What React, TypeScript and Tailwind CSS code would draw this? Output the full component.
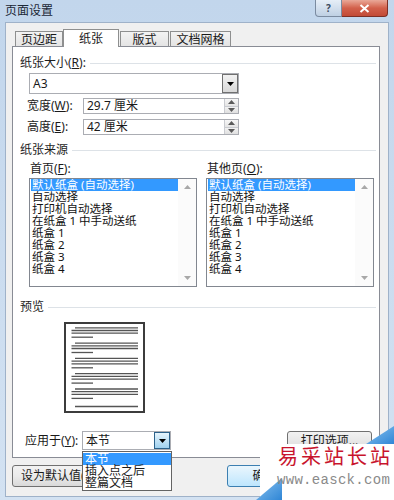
import React from "react";

const Down = ({ c = "#000" }: { c?: string }) => (
  <svg width="7" height="4" viewBox="0 0 7 4">
    <polygon points="0,0 7,0 3.5,4" fill={c} />
  </svg>
);
const Up = ({ c = "#000" }: { c?: string }) => (
  <svg width="7" height="4" viewBox="0 0 7 4">
    <polygon points="0,4 7,4 3.5,0" fill={c} />
  </svg>
);

const Spin = () => (
  <div className="flex flex-col w-[14px] h-full border-l border-[#c9cbd0]">
    <div className="flex-1 flex items-center justify-center bg-gradient-to-b from-[#f7f7f7] to-[#e4e4e4] border-b border-[#c9cbd0]">
      <Up c="#5a5a5a" />
    </div>
    <div className="flex-1 flex items-center justify-center bg-gradient-to-b from-[#f2f2f2] to-[#e0e0e0]">
      <Down c="#5a5a5a" />
    </div>
  </div>
);

const Header = ({ children, mt }: { children: React.ReactNode; mt: string }) => (
  <div className={`${mt} flex items-center h-[14px] pl-[7px]`}>
    <span className="leading-[14px] text-[#1e1e1e] whitespace-nowrap">{children}</span>
    <div className="flex-1 h-px bg-[#dde2e7] ml-[4px] mr-[3px]" />
  </div>
);

const items = [
  "默认纸盒 (自动选择)",
  "自动选择",
  "打印机自动选择",
  "在纸盒 1 中手动送纸",
  "纸盒 1",
  "纸盒 2",
  "纸盒 3",
  "纸盒 4",
];

const ListBox = () => (
  <div className="mt-[2px] h-[109px] border border-[#828790] bg-white flex">
    <div className="flex-1 pl-px">
      {items.map((t, i) => (
        <div
          key={i}
          className={`h-[12px] leading-[12px] text-[11.5px] pl-px whitespace-nowrap ${
            i === 0 ? "bg-[#3399ff] text-white" : "text-[#111]"
          }`}
        >
          {t}
        </div>
      ))}
    </div>
    <div className="w-[18px] bg-[#fbfbfb] flex flex-col items-center justify-between py-[6px]">
      <Up c="#a8a8a8" />
      <Down c="#a8a8a8" />
    </div>
  </div>
);

const Preview = () => {
  const groups = [0, 1, 2, 3, 4];
  return (
    <svg width="82" height="92" viewBox="0 0 82 92">
      <rect x="1" y="1" width="79" height="89" fill="#fff" stroke="#3c3c3c" strokeWidth="2" />
      {groups.map((k) => {
        const y0 = 5.8 + 15.3 * k;
        return (
          <g key={k} stroke="#555" strokeWidth="1.3">
            <line x1="11" y1={y0} x2="74" y2={y0} />
            <line x1="7.5" y1={y0 + 2.7} x2="74" y2={y0 + 2.7} />
            <line x1="7.5" y1={y0 + 5.4} x2="74" y2={y0 + 5.4} />
            <line x1="7.5" y1={y0 + 9.4} x2="29" y2={y0 + 9.4} />
          </g>
        );
      })}
      <line x1="11" y1="84.5" x2="74" y2="84.5" stroke="#555" strokeWidth="1.3" />
    </svg>
  );
};

export default function App() {
  return (
    <div className="relative w-[394px] h-[500px] overflow-hidden bg-gradient-to-b from-[#c2d6ec] to-[#d3e2f2] font-['Noto_Sans','Noto_Sans_CJK_SC',sans-serif] text-[12px] text-[#1a1a1a]">
      {/* title bar */}
      <div className="flex h-[22px] items-start">
        <div className="pl-[5px] pt-[4px] leading-[14px] text-[12px] text-[#1b2736]">页面设置</div>
        <div className="ml-auto mr-[6px] flex">
          <div className="w-[27px] h-[17px] border border-[#7b8ba0] border-t-0 rounded-bl-[4px] bg-gradient-to-b from-[#e6eef7] to-[#bfd0e3] flex items-center justify-center text-[10px] font-bold leading-none text-[#3a4a60]">
            ?
          </div>
          <div className="w-[46px] h-[17px] border border-[#7c2f25] border-t-0 border-l-0 rounded-br-[4px] bg-gradient-to-b from-[#e9a898] via-[#d2604b] to-[#c24a36] flex items-center justify-center">
            <svg width="11" height="9" viewBox="0 0 11 9">
              <path d="M1.5 1 L9.5 8 M9.5 1 L1.5 8" stroke="#fff" strokeWidth="2" />
            </svg>
          </div>
        </div>
      </div>

      {/* dialog body */}
      <div className="mx-[5px] h-[475px] border border-[#9fb2c9] bg-[#f0f0f0] flex flex-col">
        {/* tabs */}
        <div className="flex items-end h-[24px] pl-[9px]">
          <div className="w-[48px] h-[16px] border border-b-0 border-[#8e8f8f] bg-gradient-to-b from-[#f3f3f3] to-[#e3e3e3] flex items-center justify-center leading-[14px]">
            页边距
          </div>
          <div className="relative z-10 w-[56px] h-[18px] border border-b-0 border-[#8e8f8f] bg-white flex items-center justify-center leading-[14px] pt-px">
            纸张
          </div>
          <div className="ml-px w-[49px] h-[16px] border border-b-0 border-[#8e8f8f] bg-gradient-to-b from-[#f3f3f3] to-[#e3e3e3] flex items-center justify-center leading-[14px]">
            版式
          </div>
          <div className="ml-px w-[61px] h-[16px] border border-b-0 border-[#8e8f8f] bg-gradient-to-b from-[#f3f3f3] to-[#e3e3e3] flex items-center justify-center leading-[14px]">
            文档网格
          </div>
        </div>

        {/* panel */}
        <div className="-mt-px ml-[6px] w-[368px] h-[412px] border border-[#898c95] bg-white flex flex-col">
          <Header mt="mt-[9px]">
            纸张大小(<u>R</u>):
          </Header>

          <div className="mt-[3px] ml-[16px] w-[210px] h-[21px] border border-[#abadb3] bg-white flex items-stretch">
            <div className="flex-1 pl-[3px] leading-[19px]">A3</div>
            <div className="w-[16px] border border-[#707070] bg-gradient-to-b from-[#f2f2f2] to-[#d8d8d8] flex items-center justify-center">
              <Down />
            </div>
          </div>

          <div className="mt-[4px] flex items-center h-[16px]">
            <div className="ml-[14px] w-[56px] leading-[14px] whitespace-nowrap">
              宽度(<u>W</u>):
            </div>
            <div className="w-[156px] h-[16px] border border-[#abadb3] bg-white flex">
              <div className="flex-1 pl-[3px] leading-[14px]">29.7 厘米</div>
              <Spin />
            </div>
          </div>

          <div className="mt-[5px] flex items-center h-[16px]">
            <div className="ml-[14px] w-[56px] leading-[14px] whitespace-nowrap">
              高度(<u>E</u>):
            </div>
            <div className="w-[156px] h-[16px] border border-[#abadb3] bg-white flex">
              <div className="flex-1 pl-[3px] leading-[14px]">42 厘米</div>
              <Spin />
            </div>
          </div>

          <Header mt="mt-[8px]">纸张来源</Header>

          <div className="mt-[5px] flex pl-[16px] gap-[9px]">
            <div className="w-[168px] flex flex-col">
              <div className="h-[14px] leading-[14px] pl-px">
                首页(<u>F</u>):
              </div>
              <ListBox />
            </div>
            <div className="w-[168px] flex flex-col">
              <div className="h-[14px] leading-[14px] pl-px">
                其他页(<u>O</u>):
              </div>
              <ListBox />
            </div>
          </div>

          <Header mt="mt-[13px]">预览</Header>

          <div className="mt-[8px] ml-[51px]">
            <Preview />
          </div>

          <div className="mt-[17px] flex items-center h-[19px]">
            <div className="ml-[12px] w-[57px] leading-[14px] whitespace-nowrap">
              应用于(<u>Y</u>):
            </div>
            <div className="w-[89px] h-[19px] border border-[#abadb3] bg-white flex">
              <div className="flex-1 pl-[3px] leading-[17px]">本节</div>
              <div className="w-[16px] border border-[#2c628b] bg-gradient-to-b from-[#e5f4fc] to-[#9fd1ef] flex items-center justify-center">
                <Down />
              </div>
            </div>
            <div className="ml-auto mr-[7px] w-[85px] h-[19px] border border-[#707070] rounded-[3px] bg-gradient-to-b from-[#f2f2f2] to-[#dddddd] flex items-center justify-center leading-[14px]">
              打印选项...
            </div>
          </div>
        </div>

        {/* bottom buttons */}
        <div className="mt-[7px] flex h-[22px]">
          <div className="ml-[6px] w-[78px] border border-[#707070] rounded-[3px] bg-gradient-to-b from-[#f2f2f2] via-[#ebebeb] to-[#d9d9d9] flex items-center pl-[8px] leading-[14px] whitespace-nowrap">
            设为默认值(<u>D</u>)
          </div>
          <div className="ml-[137px] w-[75px] border border-[#3c7fb1] rounded-[3px] bg-gradient-to-b from-[#eaf6fd] to-[#bee6fd] flex items-center justify-center leading-[14px]">
            确定
          </div>
          <div className="ml-[6px] w-[75px] border border-[#707070] rounded-[3px] bg-gradient-to-b from-[#f2f2f2] to-[#dddddd] flex items-center justify-center leading-[14px]">
            取消
          </div>
        </div>
      </div>

      {/* open dropdown list */}
      <div className="absolute left-[82px] top-[451px] w-[90px] border border-[#646464] bg-white py-px">
        <div className="h-[12px] leading-[12px] pl-[2px] bg-[#3399ff] text-white">本节</div>
        <div className="h-[12px] leading-[12px] pl-[2px]">插入点之后</div>
        <div className="h-[12px] leading-[12px] pl-[2px]">整篇文档</div>
      </div>

      {/* watermark */}
      <div className="absolute left-[256px] top-[426px] w-[138px] h-[74px]">
        <svg className="absolute inset-0" width="138" height="74" viewBox="0 0 138 74">
          <defs>
            <linearGradient id="wb" x1="0" y1="0" x2="1" y2="1">
              <stop offset="0" stopColor="#8cc4ef" />
              <stop offset="1" stopColor="#2f86d6" />
            </linearGradient>
          </defs>
          <rect x="4" y="18" width="134" height="56" fill="#fff" />
          <polygon points="110,18 138,18 138,0" fill="url(#wb)" />
          <polygon points="0,74 26,52 26,74" fill="url(#wb)" />
        </svg>
        <div className="absolute left-[22px] top-[18px] text-[20px] leading-[26px] tracking-[3px] text-[#c8142d] whitespace-nowrap">
          易采站长站
        </div>
        <div className="absolute left-[21px] top-[46px] font-['Liberation_Mono',monospace] text-[14px] leading-[16px] tracking-[0.3px] text-[#8a8a8a] whitespace-nowrap">
          www.easck.com
        </div>
      </div>
    </div>
  );
}
